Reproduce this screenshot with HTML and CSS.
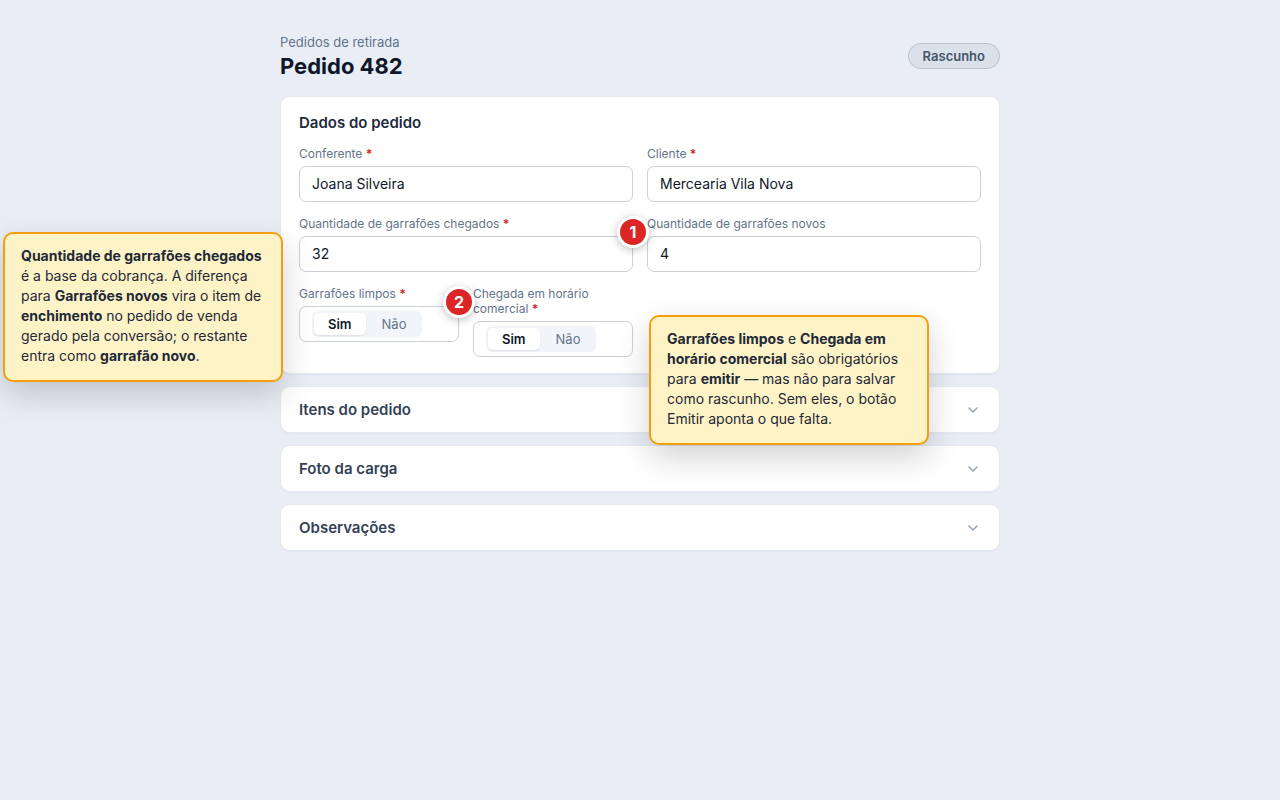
FILE: index.html
```html
<!DOCTYPE html>
<html lang="pt-BR">
<head>
  <meta charset="UTF-8">
  <meta name="viewport" content="width=device-width, initial-scale=1.0">
  <title>Pedido 482</title>
  <link rel="stylesheet" href="styles.css">
</head>
<body>
  <main class="page">
    <header class="page-hd">
      <div>
        <p class="crumb">Pedidos de retirada</p>
        <h1>Pedido 482</h1>
      </div>
      <span class="status">Rascunho</span>
    </header>

    <section class="card">
      <h2>Dados do pedido</h2>
      <form class="fields">
        <div class="field wide">
          <label class="name" for="conferente">Conferente <b class="req">*</b></label>
          <input class="box" type="text" id="conferente" value="Joana Silveira">
        </div>
        <div class="field wide">
          <label class="name" for="cliente">Cliente <b class="req">*</b></label>
          <input class="box" type="text" id="cliente" value="Mercearia Vila Nova">
        </div>
        <div class="field wide">
          <label class="name" for="chegados">Quantidade de garrafões chegados <b class="req">*</b></label>
          <input class="box" type="text" inputmode="numeric" id="chegados" value="32">
          <span class="pin">1</span>
          <p class="note note-left"><b>Quantidade de garrafões chegados</b> é a base da cobrança. A diferença para <b>Garrafões novos</b> vira o item de <b>enchimento</b> no pedido de venda gerado pela conversão; o restante entra como <b>garrafão novo</b>.</p>
        </div>
        <div class="field wide">
          <label class="name" for="novos">Quantidade de garrafões novos</label>
          <input class="box" type="text" inputmode="numeric" id="novos" value="4">
        </div>
        <div class="field" role="radiogroup" aria-labelledby="limpos">
          <span class="name" id="limpos">Garrafões limpos <b class="req">*</b></span>
          <div class="box">
            <div class="toggle">
              <input type="radio" name="limpos" id="limpos_sim" checked>
              <label for="limpos_sim">Sim</label>
              <input type="radio" name="limpos" id="limpos_nao">
              <label for="limpos_nao">Não</label>
            </div>
          </div>
          <span class="pin">2</span>
        </div>
        <div class="field" role="radiogroup" aria-labelledby="horario">
          <span class="name" id="horario">Chegada em horário comercial <b class="req">*</b></span>
          <div class="box">
            <div class="toggle">
              <input type="radio" name="horario" id="horario_sim" checked>
              <label for="horario_sim">Sim</label>
              <input type="radio" name="horario" id="horario_nao">
              <label for="horario_nao">Não</label>
            </div>
          </div>
          <p class="note note-right"><b>Garrafões limpos</b> e <b>Chegada em horário comercial</b> são obrigatórios para <b>emitir</b> — mas não para salvar como rascunho. Sem eles, o botão Emitir aponta o que falta.</p>
        </div>
      </form>
    </section>

    <button class="card fold" type="button" aria-expanded="false">
      Itens do pedido
      <svg width="16" height="16" viewBox="0 0 16 16"><path d="M4 6l4 4 4-4"/></svg>
    </button>
    <button class="card fold" type="button" aria-expanded="false">
      Foto da carga
      <svg width="16" height="16" viewBox="0 0 16 16"><path d="M4 6l4 4 4-4"/></svg>
    </button>
    <button class="card fold" type="button" aria-expanded="false">
      Observações
      <svg width="16" height="16" viewBox="0 0 16 16"><path d="M4 6l4 4 4-4"/></svg>
    </button>
  </main>
</body>
</html>
```
FILE: styles.css
```css
* {
  box-sizing: border-box;
  margin: 0;
  padding: 0;
}
body {
  background-color: #e8edf6;
  color: #0f172a;
  font-family: Inter, "Liberation Sans", sans-serif;
  font-size: 14px;
}
input, button {
  font: inherit;
  color: inherit;
}
.page {
  display: flex;
  flex-direction: column;
  gap: 12px;
  max-width: 720px;
  margin: 0 auto;
  padding: 32px 0;
}

/* header */
.page-hd {
  display: flex;
  align-items: center;
  justify-content: space-between;
  margin-bottom: 4px;
}
.crumb {
  color: #64748b;
  font-size: 13px;
  line-height: 20px;
}
h1 {
  font-size: 22px;
  line-height: 28px;
}
.status {
  padding: 4px 14px;
  border: 1px solid #b9c2d0;
  border-radius: 13px;
  background-color: #dbe1eb;
  color: #475569;
  font-size: 13px;
  font-weight: 600;
  line-height: 16px;
}

/* cards */
.card {
  padding: 16px 18px;
  border: 1px solid #e4eaf2;
  border-radius: 10px;
  background-color: #fff;
  box-shadow: 0 1px 2px rgba(15, 23, 42, .04);
}
h2 {
  margin-bottom: 13px;
  color: #1e293b;
  font-size: 15px;
  font-weight: 600;
  line-height: 20px;
}
.fold {
  display: flex;
  align-items: center;
  justify-content: space-between;
  padding: 13px 18px;
  color: #334155;
  font-size: 15px;
  font-weight: 600;
  line-height: 19px;
  cursor: pointer;
}
.fold svg {
  fill: none;
  stroke: #94a3b8;
  stroke-width: 1.5;
  stroke-linecap: round;
  stroke-linejoin: round;
}

/* form */
.fields {
  display: grid;
  grid-template-columns: repeat(4, 1fr);
  align-items: start;
  gap: 14px;
}
.field {
  position: relative;
  min-width: 0;
}
.wide {
  grid-column: span 2;
}
.name {
  display: block;
  margin-bottom: 5px;
  color: #64748b;
  font-size: 12px;
  line-height: 15px;
}
.req {
  color: #dc2626;
}
.box {
  display: flex;
  align-items: center;
  width: 100%;
  height: 36px;
  padding: 0 12px 1px;
  border: 1px solid #cbd0d8;
  border-radius: 7px;
  background-color: #fff;
}

/* sim / não */
.toggle {
  display: flex;
  gap: 2px;
  padding: 2px;
  border-radius: 6px;
  background-color: #f1f5f9;
}
.toggle input {
  position: absolute;
  opacity: 0;
}
.toggle label {
  padding: 3px 14px;
  border-radius: 5px;
  color: #64748b;
  font-size: 13px;
  line-height: 16px;
  cursor: pointer;
}
.toggle input:checked + label {
  background-color: #fff;
  box-shadow: 0 1px 2px rgba(15, 23, 42, .1);
  color: #0f172a;
  font-weight: 600;
}

/* pins and notes over the form */
.pin {
  position: absolute;
  top: 0;
  right: -16px;
  z-index: 2;
  width: 32px;
  height: 32px;
  border: 3px solid #fff;
  border-radius: 50%;
  background-color: #dc2626;
  box-shadow: 0 2px 8px rgba(0, 0, 0, .25);
  color: #fff;
  font-size: 16px;
  font-weight: 700;
  line-height: 26px;
  text-align: center;
}
.note {
  position: absolute;
  z-index: 1;
  width: 280px;
  padding: 12px 16px 14px;
  border: 2px solid #f59e0b;
  border-radius: 10px;
  background-color: #fef3c7;
  box-shadow: 0 12px 32px rgba(0, 0, 0, .18);
  color: #1f2937;
  font-size: 14px;
  line-height: 20px;
}
.note-left {
  top: 16px;
  right: calc(100% + 16px);
}
.note-right {
  top: 29px;
  left: calc(100% + 16px);
}
```
